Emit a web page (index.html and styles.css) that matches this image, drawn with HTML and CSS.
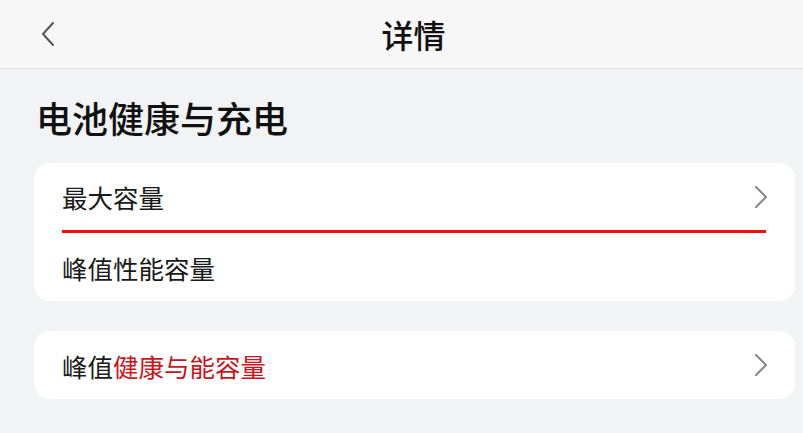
FILE: index.html
```html
<!DOCTYPE html>
<html>
  <head>
    <meta charset="UTF-8">
    <title>详情</title>
    <link rel="stylesheet" href="styles.css">
  </head>
  <body>
    <header class="top-bar">
      <div class="back-button">
        <svg width="16" height="26" viewBox="0 0 16 26"><polyline points="13,2 3,13 13,24" fill="none" stroke="#555" stroke-width="2" stroke-linecap="round" stroke-linejoin="round"/></svg>
      </div>
      <h1 class="top-title">详情</h1>
      <div></div>
    </header>

    <main class="content">
      <h2 class="section-title">电池健康与充电</h2>

      <div class="card">
        <div class="row row-marked">
          <span class="row-label">最大容量</span>
          <svg class="chevron" width="16" height="24" viewBox="0 0 16 24"><polyline points="3,2 13,12 3,22" fill="none" stroke="#888" stroke-width="2" stroke-linecap="round" stroke-linejoin="round"/></svg>
        </div>
        <div class="row">
          <span class="row-label">峰值性能容量</span>
        </div>
      </div>

      <div class="card">
        <div class="row">
          <span class="row-label">峰值<span class="highlight">健康与能容量</span></span>
          <svg class="chevron" width="16" height="24" viewBox="0 0 16 24"><polyline points="3,2 13,12 3,22" fill="none" stroke="#888" stroke-width="2" stroke-linecap="round" stroke-linejoin="round"/></svg>
        </div>
      </div>
    </main>
  </body>
</html>
```

FILE: styles.css
```css
body {
  margin: 0;
  background-color: #f2f3f5;
  font-family: "Noto Sans CJK SC", "Noto Sans", sans-serif;
  color: #111;
}
.top-bar {
  display: grid;
  grid-template-columns: 1fr auto 1fr;
  align-items: center;
  height: 68px;
  background-color: #f7f7f7;
  border-bottom: 1px solid #e4e4e4;
}
.back-button {
  display: flex;
  align-items: center;
  padding-left: 40px;
}
.top-title {
  margin: 0 0 0 24px;
  font-size: 32px;
  font-weight: 500;
  line-height: 1;
}
.content {
  padding: 0 8px 0 34px;
}
.section-title {
  margin: 0;
  padding: 26px 0 24px 2px;
  font-size: 36px;
  font-weight: 500;
  line-height: 44px;
}
.card {
  background-color: #fff;
  border-radius: 16px;
  margin-bottom: 30px;
}
.row {
  display: flex;
  align-items: center;
  justify-content: space-between;
  height: 68px;
  margin: 0 29px 0 28px;
}
.row-marked {
  height: 67px;
  border-bottom: 3px solid #f20d0d;
}
.row-label {
  font-size: 25.5px;
  color: #1a1a1a;
}
.highlight {
  color: #c8161d;
}
.chevron {
  margin-right: -3px;
}
```
